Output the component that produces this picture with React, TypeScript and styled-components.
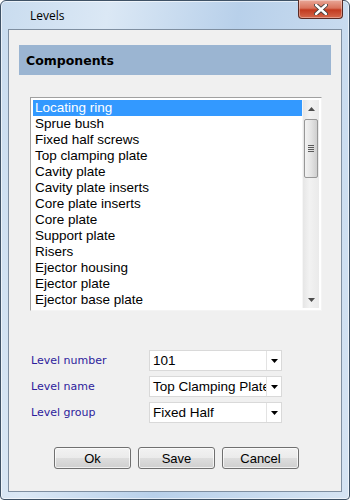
import React from "react"
import styled, { createGlobalStyle } from "styled-components"

const Global = createGlobalStyle`
  html, body { margin: 0; padding: 0; background: #ffffff; }
  #root { width: 350px; height: 500px; }
`

const Frame = styled.div`
  box-sizing: border-box;
  width: 350px;
  height: 500px;
  display: flex;
  flex-direction: column;
  padding: 0 7px 7px 7px;
  border: 1px solid #3f5266;
  border-radius: 6px 6px 4px 4px;
  background: linear-gradient(100deg, #c9dcef 0%, #dbe8f5 25%, #b8d0ea 55%, #c8dbef 80%, #d6e4f3 100%);
  box-shadow: inset 0 0 0 1px rgba(255,255,255,0.6);
`

const TitleBar = styled.div`
  height: 28px;
  display: flex;
  align-items: flex-start;
  justify-content: space-between;
`

const Title = styled.div`
  font-family: "Open Sans", "DejaVu Sans", sans-serif;
  font-size: 12px;
  color: #000;
  padding: 6px 0 0 22px;
`

const CloseBtn = styled.div`
  width: 45px;
  height: 19px;
  margin-top: -1px;
  margin-right: -1px;
  box-sizing: border-box;
  border: 1px solid #5a2a24;
  border-top: none;
  border-radius: 0 0 4px 4px;
  background: linear-gradient(180deg, #e9a898 0%, #d9735c 45%, #c23a1f 55%, #d5684c 100%);
  display: flex;
  align-items: center;
  justify-content: center;
  box-shadow: inset 0 0 0 1px rgba(255,255,255,0.35);
`

const Client = styled.div`
  flex: 1;
  box-sizing: border-box;
  background: #f0f0f0;
  border: 1px solid #7f8fa1;
  display: flex;
  flex-direction: column;
  padding: 15px 10px 0 10px;
`

const Header = styled.div`
  height: 30px;
  background: #9bb5d2;
  display: flex;
  align-items: center;
  padding-left: 7px;
  font-family: "DejaVu Sans", Verdana, sans-serif;
  font-weight: bold;
  font-size: 12.5px;
  color: #000;
`

const ListBox = styled.div`
  box-sizing: border-box;
  margin: 22px 0 0 11px;
  width: 292px;
  height: 214px;
  padding: 2px;
  background: #ffffff;
  border: 1px solid #f4f4f4;
  border-top-color: #a0a0a0;
  border-left-color: #a0a0a0;
  display: flex;
`

const Items = styled.div`
  flex: 1;
  display: flex;
  flex-direction: column;
`

const Item = styled.div<{ $sel?: boolean }>`
  height: 16px;
  line-height: 16px;
  padding-left: 2px;
  font-family: "Liberation Sans", Arial, sans-serif;
  font-size: 13.5px;
  white-space: nowrap;
  color: ${p => (p.$sel ? "#ffffff" : "#000000")};
  background: ${p => (p.$sel ? "#3399ff" : "transparent")};
`

const ScrollBar = styled.div`
  width: 17px;
  display: flex;
  flex-direction: column;
  background: linear-gradient(90deg, #e6e6e6, #f2f2f2 40%, #eaeaea);
  border-left: 1px solid #f6f6f6;
  box-sizing: border-box;
`

const Arrow = styled.div`
  height: 17px;
  display: flex;
  align-items: center;
  justify-content: center;
`

const Track = styled.div`
  flex: 1;
  padding: 2px 1px 0 1px;
`

const Thumb = styled.div`
  box-sizing: border-box;
  height: 59px;
  border: 1px solid #979797;
  border-radius: 2px;
  background: linear-gradient(90deg, #f2f2f2 0%, #e4e4e4 50%, #cfcfcf 100%);
  display: flex;
  flex-direction: column;
  align-items: center;
  justify-content: center;
  gap: 1px;
`

const Grip = styled.div`
  width: 6px;
  height: 1px;
  background: #5a5a5a;
`

const Form = styled.div`
  margin: 39px 0 0 12px;
  display: flex;
  flex-direction: column;
  gap: 5px;
`

const Row = styled.div`
  display: flex;
  align-items: center;
  height: 21px;
`

const Label = styled.div`
  width: 118px;
  font-family: "DejaVu Sans", Tahoma, sans-serif;
  font-size: 11px;
  color: #2d1c9c;
`

const Combo = styled.div`
  box-sizing: border-box;
  width: 133px;
  height: 21px;
  background: #fff;
  border: 1px solid #d9d9d9;
  display: flex;
`

const ComboText = styled.div`
  flex: 1;
  min-width: 0;
  overflow: hidden;
  white-space: nowrap;
  padding-left: 3px;
  line-height: 19px;
  font-family: "Liberation Sans", Arial, sans-serif;
  font-size: 13.5px;
  color: #000;
`

const ComboDrop = styled.div`
  width: 14px;
  border-left: 1px solid #e3e3e3;
  display: flex;
  align-items: center;
  justify-content: center;
`

const Buttons = styled.div`
  margin: 24px 0 0 35px;
  display: flex;
  gap: 7px;
`

const Button = styled.div`
  box-sizing: border-box;
  width: 77px;
  height: 22px;
  border: 1px solid #707070;
  border-radius: 3px;
  background: linear-gradient(180deg, #f2f2f2 0%, #ebebeb 48%, #dddddd 52%, #cfcfcf 100%);
  box-shadow: inset 0 0 0 1px rgba(255,255,255,0.7);
  display: flex;
  align-items: center;
  justify-content: center;
  font-family: "Liberation Sans", Arial, sans-serif;
  font-size: 13px;
  color: #000;
`

const items = [
  "Locating ring",
  "Sprue bush",
  "Fixed half screws",
  "Top clamping plate",
  "Cavity plate",
  "Cavity plate inserts",
  "Core plate inserts",
  "Core plate",
  "Support plate",
  "Risers",
  "Ejector housing",
  "Ejector plate",
  "Ejector base plate",
]

const fields = [
  { label: "Level number", value: "101" },
  { label: "Level name", value: "Top Clamping Plate" },
  { label: "Level group", value: "Fixed Half" },
]

const Tri = ({ up, color }: { up?: boolean; color: string }) => (
  <svg width="7" height="4" viewBox="0 0 7 4">
    <path d={up ? "M0 4 L3.5 0 L7 4 Z" : "M0 0 L7 0 L3.5 4 Z"} fill={color} />
  </svg>
)

export default function App() {
  return (
    <>
      <Global />
      <Frame>
        <TitleBar>
          <Title>Levels</Title>
          <CloseBtn>
            <svg width="14" height="11" viewBox="0 0 14 11">
              <path d="M2 1 L12 10 M12 1 L2 10" stroke="#3b3b3b" strokeWidth="4.2" strokeLinecap="round" />
              <path d="M2 1 L12 10 M12 1 L2 10" stroke="#ffffff" strokeWidth="2.4" strokeLinecap="round" />
            </svg>
          </CloseBtn>
        </TitleBar>
        <Client>
          <Header>Components</Header>
          <ListBox>
            <Items>
              {items.map((t, i) => (
                <Item key={t} $sel={i === 0}>{t}</Item>
              ))}
            </Items>
            <ScrollBar>
              <Arrow><Tri up color="#4d4d4d" /></Arrow>
              <Track>
                <Thumb>
                  <Grip /><Grip /><Grip /><Grip />
                </Thumb>
              </Track>
              <Arrow><Tri color="#4d4d4d" /></Arrow>
            </ScrollBar>
          </ListBox>
          <Form>
            {fields.map(f => (
              <Row key={f.label}>
                <Label>{f.label}</Label>
                <Combo>
                  <ComboText>{f.value}</ComboText>
                  <ComboDrop><Tri color="#000" /></ComboDrop>
                </Combo>
              </Row>
            ))}
          </Form>
          <Buttons>
            <Button>Ok</Button>
            <Button>Save</Button>
            <Button>Cancel</Button>
          </Buttons>
        </Client>
      </Frame>
    </>
  )
}
